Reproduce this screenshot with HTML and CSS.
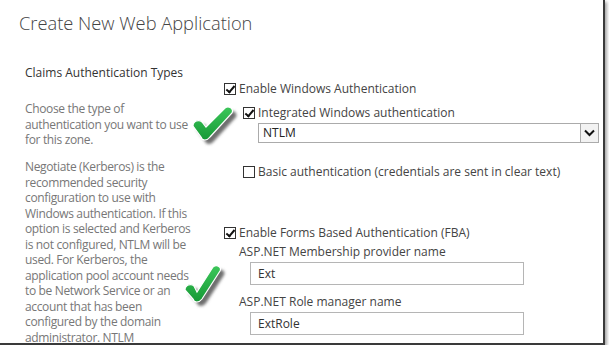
FILE: index.html
```html
<!DOCTYPE html>
<html lang="en">
<head>
    <meta charset="UTF-8">
    <title>Create New Web Application</title>
    <link rel="stylesheet" href="styles.css">
</head>
<body>
    <div class="frame">
        <h1 class="page-title">Create New Web Application</h1>
        <div class="section">
            <div class="section-info">
                <h2 class="section-title">Claims Authentication Types</h2>
                <p>Choose the type of authentication you want to use for this zone.</p>
                <p>Negotiate (Kerberos) is the recommended security configuration to use with Windows authentication. If this option is selected and Kerberos is not configured, NTLM will be used. For Kerberos, the application pool account needs to be Network Service or an account that has been configured by the domain administrator. NTLM</p>
            </div>
            <div class="section-fields">
                <div class="check-row">
                    <span class="box checked"></span>Enable Windows Authentication
                </div>
                <div class="check-row sub first-sub">
                    <span class="box checked"></span>Integrated Windows authentication
                </div>
                <div class="select">
                    <span class="select-value">NTLM</span>
                    <span class="select-arrow">
                        <svg width="11" height="8" viewBox="0 0 11 8"><path d="M1 1.5 L5.5 6 L10 1.5" fill="none" stroke="#111" stroke-width="2"/></svg>
                    </span>
                </div>
                <div class="check-row sub basic">
                    <span class="box"></span>Basic authentication (credentials are sent in clear text)
                </div>
                <div class="check-row fba">
                    <span class="box checked"></span>Enable Forms Based Authentication (FBA)
                </div>
                <div class="field-label">ASP.NET Membership provider name</div>
                <div class="text-input">Ext</div>
                <div class="field-label second">ASP.NET Role manager name</div>
                <div class="text-input">ExtRole</div>
            </div>
        </div>

        <svg class="tick tick-top" width="56" height="50" viewBox="0 0 56 50">
            <defs>
                <filter id="soft" x="-20%" y="-20%" width="140%" height="140%">
                    <feGaussianBlur stdDeviation="1.6"/>
                </filter>
                <linearGradient id="green" x1="0" y1="0" x2="0" y2="1">
                    <stop offset="0" stop-color="#3cc65a"/>
                    <stop offset="1" stop-color="#169936"/>
                </linearGradient>
            </defs>
            <path transform="translate(4 4)" d="M5 27 C5 22 11 20 14 23 L18 28 L37 9 C41 6 46 10 44 14 L22 38 C19 42 14 42 13 38 Z" fill="#6e6e6e" filter="url(#soft)"/>
            <path d="M5 27 C5 22 11 20 14 23 L18 28 L37 9 C41 6 46 10 44 14 L22 38 C19 42 14 42 13 38 Z" fill="url(#green)" stroke="#fff" stroke-width="1.2"/>
        </svg>
        <svg class="tick tick-bottom" width="56" height="50" viewBox="0 0 56 50">
            <path transform="translate(4 4)" d="M4 30 C4 25 10 23 13 26 L16 32 L32 7 C36 4 41 7 39 11 L21 39 C18 43 13 43 12 39 Z" fill="#6e6e6e" filter="url(#soft)"/>
            <path d="M4 30 C4 25 10 23 13 26 L16 32 L32 7 C36 4 41 7 39 11 L21 39 C18 43 13 43 12 39 Z" fill="url(#green)" stroke="#fff" stroke-width="1.2"/>
        </svg>
    </div>
</body>
</html>
```

FILE: styles.css
```css
body {
    margin: 0;
    background-color: #fff;
    font-family: "Open Sans", "Noto Sans", sans-serif;
}

.frame {
    position: relative;
    width: 603px;
    height: 343px;
    background-color: #fff;
    border-right: 2px solid #3a3a3a;
    border-bottom: 2px solid #3a3a3a;
    box-shadow: 2px 2px 3px rgba(0, 0, 0, 0.35);
    overflow: hidden;
}

.page-title {
    margin: 0;
    padding: 11px 0 0 19px;
    font-size: 18.3px;
    font-weight: 300;
    line-height: 24px;
    color: #444;
}

.section {
    display: flex;
    margin-top: 30px;
}

.section-info {
    width: 170px;
    padding-left: 25px;
    font-size: 12px;
    letter-spacing: -0.35px;
    color: #777;
}

.section-title {
    margin: 0;
    font-size: 12px;
    font-weight: normal;
    line-height: 16px;
    letter-spacing: 0;
    color: #333;
}

.section-info p {
    margin: 20px 0 0 0;
    line-height: 15.5px;
}

.section-info p + p {
    margin-top: 11.5px;
}

.section-fields {
    padding-left: 29px;
    padding-top: 16px;
    font-size: 12px;
    color: #444;
}

.check-row {
    display: flex;
    align-items: center;
    height: 16px;
    line-height: 16px;
}

.check-row.sub {
    margin-left: 19px;
}

.check-row.first-sub {
    margin-top: 8px;
}

.check-row.basic {
    margin-top: 21px;
}

.check-row.fba {
    margin-top: 45px;
}

.box {
    position: relative;
    box-sizing: border-box;
    width: 12px;
    height: 12px;
    margin-right: 3px;
    border: 1px solid #333;
    background-color: #fff;
}

.box.checked::after {
    content: "";
    position: absolute;
    left: 3px;
    top: 0px;
    width: 3px;
    height: 7px;
    border-right: 2px solid #111;
    border-bottom: 2px solid #111;
    transform: rotate(40deg);
}

.select {
    display: flex;
    box-sizing: border-box;
    width: 341px;
    height: 20px;
    margin: 2px 0 0 34px;
    border: 1px solid #ababab;
    color: #222;
}

.select-value {
    flex: 1;
    padding-left: 4px;
    line-height: 18px;
}

.select-arrow {
    display: flex;
    align-items: center;
    justify-content: center;
    width: 17px;
    border-left: 1px solid #ababab;
    background-color: #f2f2f2;
}

.field-label {
    margin: 3px 0 0 15px;
    line-height: 16px;
}

.field-label.second {
    margin-top: 9px;
}

.text-input {
    box-sizing: border-box;
    width: 274px;
    height: 23px;
    margin: 2px 0 0 26px;
    padding-left: 7px;
    border: 1px solid #b5b5b5;
    line-height: 21px;
    color: #333;
}

.tick {
    position: absolute;
}

.tick-top {
    left: 188px;
    top: 99px;
}

.tick-bottom {
    left: 181px;
    top: 260px;
}
```
